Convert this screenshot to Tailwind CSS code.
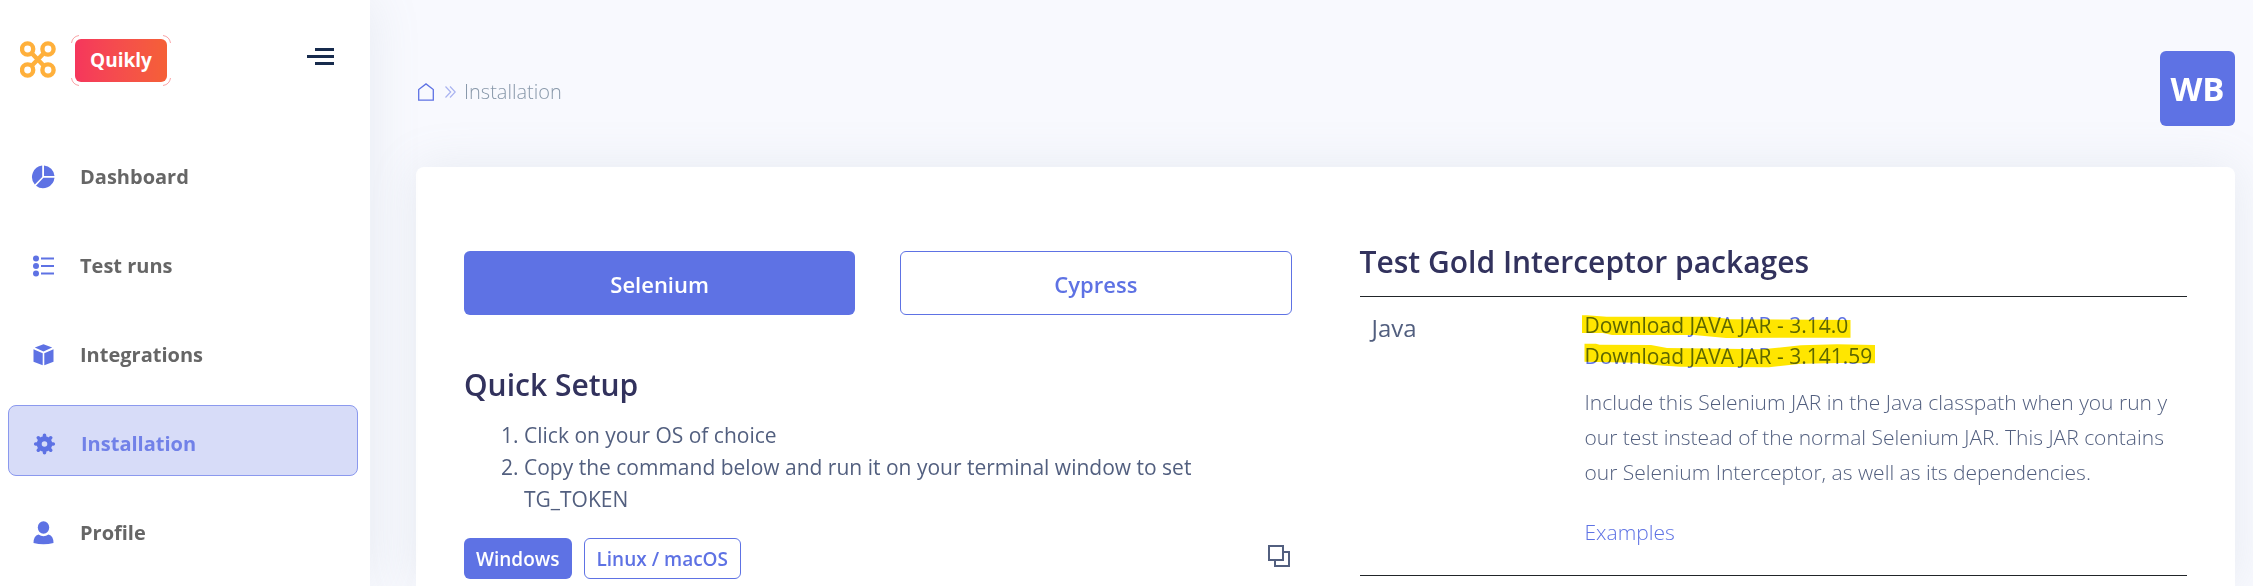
<!DOCTYPE html>
<html lang="en">
<head>
<meta charset="utf-8">
<title>Quikly - Installation</title>
<script src="https://cdn.jsdelivr.net/npm/@tailwindcss/browser@4"></script>
</head>
<body class="flex min-h-screen overflow-x-hidden bg-[#f8f9fe] font-['Open_Sans','Noto_Sans',sans-serif] text-[#525f7f]">
<aside class="relative z-10 w-[370px] shrink-0 bg-white shadow-[0_0_48px_rgba(136,152,170,0.15)]">
  <div class="flex h-[138px] items-start pt-[35px] pr-9 pl-5">
    <svg class="mt-[6px] h-[37px] w-9 shrink-0" viewBox="0 0 36 37" fill="none" stroke="#ffb03b" stroke-width="4.4" aria-label="Logo">
      <circle cx="7.6" cy="8" r="5.6"/><circle cx="28" cy="8" r="5.6"/><circle cx="7.6" cy="29" r="5.6"/><circle cx="28" cy="29" r="5.6"/>
      <path d="M11.5 12 24 25M24 12 11.5 25"/>
    </svg>
    <div class="relative ml-[15px] p-1">
      <svg class="absolute inset-0 h-full w-full" viewBox="0 0 100 51" preserveAspectRatio="none" fill="none" stroke="#f9a3a6" aria-hidden="true"><path d="M.5 8Q1.500 1.500 8 .5M92 .5Q98.500 1.500 99.500 8M.5 43Q1.500 49.500 8 50.500M92 50.500Q98.500 49.500 99.500 43"/></svg>
      <a href="#" class="flex h-[43px] w-[92px] items-center justify-center rounded-md bg-linear-to-r from-[#f5365c] to-[#f56036] text-[19px] font-bold text-white">Quikly</a>
    </div>
    <button type="button" aria-label="Toggle menu" class="mt-[13px] ml-auto flex w-[27px] flex-col items-end gap-1">
      <span class="h-[3px] w-[19px] bg-[#172b4d]"></span><span class="h-[3px] w-[27px] bg-[#172b4d]"></span><span class="h-[3px] w-[19px] bg-[#172b4d]"></span>
    </button>
  </div>
  <nav class="flex flex-col gap-[18px] pr-3 pl-2 text-[20px] font-bold text-[#666]">
    <a href="#" class="flex h-[71px] items-center gap-[25px] border border-transparent pt-[7px] pl-[22px]">
      <svg class="h-6 w-6" viewBox="0 0 24 24" fill="#5e72e4"><path d="M11.200.5V12L3.800 19.400A11.500 11.500 0 0 1 11.200.5ZM13 .5A11.500 11.500 0 0 1 23.500 11H13ZM23.500 12.800A11.500 11.500 0 0 1 5 20.700L12.400 12.800Z"/></svg>Dashboard</a>
    <a href="#" class="flex h-[71px] items-center gap-[25px] border border-transparent pt-[7px] pl-[22px]">
      <svg class="h-6 w-6" viewBox="0 0 24 24" fill="#5e72e4"><circle cx="5" cy="4.500" r="3"/><circle cx="5" cy="12" r="3"/><circle cx="5" cy="19.500" r="3"/><path d="M10 3.500h13v2H10zM10 11h13v2H10zM10 18.500h13v2H10z"/></svg>Test runs</a>
    <a href="#" class="flex h-[71px] items-center gap-[25px] border border-transparent pt-[7px] pl-[22px]">
      <svg class="h-6 w-6" viewBox="0 0 24 24" fill="#5e72e4"><path d="M12.500 1.200 21.200 4.600 12.500 8.400 3.800 4.600ZM2.500 6.300 11.700 10.300V22.300L2.500 18.700ZM22.500 6.300 13.300 10.300V22.300L22.500 18.700Z"/></svg>Integrations</a>
    <a href="#" aria-current="page" class="flex h-[71px] items-center gap-[25px] rounded-lg border border-[#8b99ee] bg-[#d7dcf8] pt-[7px] pl-[23px] text-[#7181e8]">
      <svg class="h-6 w-6" viewBox="0 0 24 24" fill="none" stroke="#5e72e4"><circle cx="12.500" cy="12" r="5.300" stroke-width="5"/><path stroke-width="3.600" stroke-linecap="round" d="M12.500 3.200v2M12.500 18.800v2M3.700 12h2M19.300 12h2M6.300 5.800l1.400 1.400M17.300 16.800l1.400 1.400M6.300 18.200l1.400-1.400M17.300 7.200l1.400-1.400"/></svg>Installation</a>
    <a href="#" class="flex h-[71px] items-center gap-[25px] border border-transparent pt-[7px] pl-[22px]">
      <svg class="h-6 w-6" viewBox="0 0 24 24" fill="#5e72e4"><ellipse cx="12.500" cy="6.500" rx="5.700" ry="6.200"/><path d="M7.500 13.500Q12.500 17 17.500 13.500 22.500 14.800 22.500 22 12.500 24.500 2.500 22 2.500 14.800 7.500 13.500Z"/></svg>Profile</a>
  </nav>
</aside>
<main class="flex min-w-0 flex-1 flex-col pr-[18px] pl-[46px]">
  <header class="flex items-center justify-between pt-[51px] pb-[41px]">
    <nav aria-label="Breadcrumb" class="flex items-center pt-[6px] text-[20px] font-light text-[#8898aa]">
      <a href="#" aria-label="Home" class="ml-[2px]"><svg class="h-[18px] w-4" viewBox="0 0 16 18" fill="none" stroke="#5e72e4" stroke-width="1.300"><path d="M.7 17.200V6.500L8 .9 15.300 6.500V17.200Z"/></svg></a>
      <svg class="ml-[11px] h-3 w-[11px]" viewBox="0 0 11 12" fill="none" stroke="#a9b3f0" stroke-width="1.200" aria-hidden="true"><path d="M.5.500 5.700 6 .5 11.500M5 .5 10.200 6 5 11.500"/></svg>
      <span class="ml-2">Installation</span>
    </nav>
    <button type="button" class="size-[75px] rounded-md bg-[#5e72e4] text-[33px] font-bold text-white">WB</button>
  </header>
  <div class="grid flex-1 grid-cols-2 gap-[68px] rounded-t-lg bg-white px-12 shadow-[0_0_48px_rgba(136,152,170,0.15)]">
    <section class="pt-[84px]">
      <div class="grid grid-cols-2 gap-[45px] text-[22px] font-semibold">
        <button type="button" class="h-16 rounded-md bg-[#5e72e4] pt-[2px] text-white">Selenium</button>
        <button type="button" class="h-16 rounded-md border border-[#5e72e4] pt-[2px] text-[#5e72e4]">Cypress</button>
      </div>
      <h2 class="mt-[48px] text-[30px] leading-[44px] font-semibold text-[#32325d]">Quick Setup</h2>
      <ol class="mt-3 list-decimal pl-[60px] text-[21px] leading-8">
        <li>Click on your OS of choice</li>
        <li>Copy the command below and run it on your terminal window to set TG_TOKEN</li>
      </ol>
      <div class="mt-[23px] flex items-start gap-3 text-[19px] font-semibold">
        <button type="button" class="h-[41px] rounded-md bg-[#5e72e4] px-3 pt-[2px] text-white">Windows</button>
        <button type="button" class="h-[41px] rounded-md border border-[#5e72e4] px-3 pt-[2px] text-[#5e72e4]">Linux / macOS</button>
        <button type="button" aria-label="Copy" class="mt-[7px] mr-[2px] ml-auto"><svg class="size-[22px]" viewBox="0 0 22 22" fill="none" stroke="#525f7f" stroke-width="2"><path d="M1 1H15V15H1ZM16 7H21V21H7V16"/></svg></button>
      </div>
    </section>
    <section class="pt-[73px]">
      <h2 class="text-[30px] leading-[44px] font-semibold text-[#32325d]">Test Gold Interceptor packages</h2>
      <table class="mt-3 w-full table-fixed border-y border-[#212529] text-left align-top">
        <colgroup><col class="w-[213px]"><col></colgroup>
        <tbody><tr>
          <th scope="row" class="px-3 pt-[13px] align-top text-[24px] leading-9 font-normal">Java</th>
          <td class="px-3 pt-[13px] pb-[25px] align-top text-[21px] break-all">
            <div class="relative leading-[31px] text-[#5e72e4]">
              <a href="#" class="block w-fit">Download JAVA JAR - 3.14.0</a>
              <a href="#" class="block w-fit">Download JAVA JAR - 3.141.59</a>
              <svg class="pointer-events-none absolute top-0 -left-1 h-[62px] w-[300px] mix-blend-multiply" viewBox="-4 310 300 62" fill="#ffe600" aria-hidden="true">
                <path d="M-3 315.300H2L21.500 316.700H127L145 319.300 265.500 320V337.700L141 338 109 335H27L18 333H-3ZM-.5 343.700H11L14.500 344.700 66 345 82 348 177 349.300 216 345.300 252 344.300 290 345V363.300L255.500 363 216 363.700 184 367.300 95 366.700 73 365.300 52 362.700-.5 361.700Z"/>
              </svg>
            </div>
            <p class="mt-[13px] leading-[35px] font-light">Include this Selenium JAR in the Java classpath when you run your test instead of the normal Selenium JAR. This JAR contains our Selenium Interceptor, as well as its dependencies.</p>
            <p class="mt-[25px] leading-[35px] font-light"><a href="#" class="text-[#5e72e4]">Examples</a></p>
          </td>
        </tr></tbody>
      </table>
    </section>
  </div>
</main>
</body>
</html>
